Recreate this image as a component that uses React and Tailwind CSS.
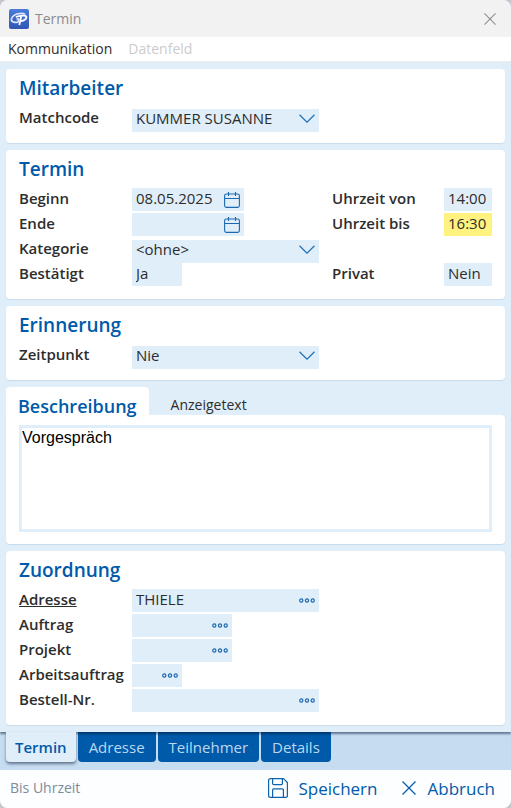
// Appointment dialog: grouped form cards, page tabs and the action footer.
import { useState } from 'react'

const PAGES = ['Termin', 'Adresse', 'Teilnehmer', 'Details']

function LogoIcon() {
  return (
    <svg className="h-5 w-5" viewBox="0 0 20 20" fill="none" aria-hidden="true">
      <defs>
        <linearGradient id="logo" x1="0" y1="0" x2="0" y2="1">
          <stop offset="0" stopColor="#4a7cda" />
          <stop offset="1" stopColor="#3156b4" />
        </linearGradient>
      </defs>
      <rect width="20" height="20" rx="2" fill="url(#logo)" />
      <path d="M16.200 5.400C13 3.200 4.600 4.800 2.700 9.300C1.400 12.600 4.600 14.200 9 12.900L9.700 10H7.500" stroke="#dfe8fa" strokeWidth="1.600" />
      <path d="M10.300 16L12.200 7.500M6.800 8C10 6.800 17.800 5.300 17.500 8.200C17.200 10.700 14.300 11.800 11.800 12.200" stroke="#fff" strokeWidth="1.800" />
    </svg>
  )
}

function ChevronIcon() {
  return (
    <svg className="pointer-events-none absolute right-1 top-[7px] h-[9px] w-4" viewBox="0 0 16 9" fill="none" stroke="#1c70b8" strokeWidth="1.200" aria-hidden="true">
      <path d="M0.500 0.800L8 8.200L15.500 0.800" />
    </svg>
  )
}

function CalendarIcon() {
  return (
    <svg className="h-4 w-4" viewBox="0 0 16 16" fill="none" stroke="#1c68b0" strokeWidth="1.100" aria-hidden="true">
      <rect x="0.600" y="2" width="14.800" height="13.400" rx="1.800" />
      <path d="M0.600 6.500H15.400M4.500 0V4M11.500 0V4" />
    </svg>
  )
}

function DotsIcon() {
  return (
    <svg className="h-[5px] w-4" viewBox="0 0 16 5" fill="none" stroke="#1c68b0" strokeWidth="1.200" aria-hidden="true">
      <circle cx="2.300" cy="2.500" r="1.600" />
      <circle cx="8" cy="2.500" r="1.600" />
      <circle cx="13.700" cy="2.500" r="1.600" />
    </svg>
  )
}

function SaveIcon() {
  return (
    <svg className="h-5 w-5" viewBox="0 0 20 20" fill="none" stroke="#0f62ac" strokeWidth="1.200" aria-hidden="true">
      <path d="M2.500 0.600H15.500L19.400 4.500V17.500A1.900 1.900 0 0 1 17.500 19.400H2.500A1.900 1.900 0 0 1 0.600 17.500V2.500A1.900 1.900 0 0 1 2.500 0.600Z" />
      <path d="M4.600 0.600V5.500A1.200 1.200 0 0 0 5.800 6.700H13.200A1.200 1.200 0 0 0 14.400 5.500V0.600M4.600 19.400V12A1.200 1.200 0 0 1 5.800 10.800H14.200A1.200 1.200 0 0 1 15.400 12V19.400" />
    </svg>
  )
}

function CrossIcon({ className }) {
  return (
    <svg className={className} viewBox="0 0 14 14" fill="none" stroke="currentColor" strokeWidth="1.200" aria-hidden="true">
      <path d="M0.500 0.500L13.500 13.500M13.500 0.500L0.500 13.500" />
    </svg>
  )
}

function Card({ title, children }) {
  return (
    <section className="rounded bg-white px-[13px] pb-[13px] shadow-[0_1px_1px_rgba(0,60,120,0.1)]">
      <h2 className="h-[38px] text-[19px] leading-[38px] font-semibold text-[#005aaa]">{title}</h2>
      <div className="grid grid-cols-[113px_minmax(0,1fr)_125px_48px] gap-y-0.5">{children}</div>
    </section>
  )
}

function Label({ htmlFor, className = '', children }) {
  return (
    <label htmlFor={htmlFor} className={`leading-[21px] font-semibold whitespace-nowrap ${className}`}>
      {children}
    </label>
  )
}

function SelectField({ id, value }) {
  return (
    <div className="relative h-[23px]">
      <select id={id} defaultValue={value} className="h-full w-full appearance-none bg-[#e0eef9] pr-6 pb-1 pl-1 leading-[19px]">
        <option>{value}</option>
      </select>
      <ChevronIcon />
    </div>
  )
}

function TextField({ id, value, className }) {
  return <input id={id} type="text" defaultValue={value} className={`h-[23px] px-1 pb-1 leading-[19px] ${className}`} />
}

function DateField({ id, value }) {
  return (
    <div className="flex h-[23px] w-28 items-center bg-[#e0eef9] px-1">
      <input id={id} type="text" defaultValue={value} className="h-full min-w-0 flex-1 bg-transparent pb-1 leading-[19px]" />
      <button type="button" aria-label="Kalender öffnen">
        <CalendarIcon />
      </button>
    </div>
  )
}

function LookupField({ id, value, className }) {
  return (
    <div className={`flex h-[23px] items-center bg-[#e0eef9] px-1 ${className}`}>
      <input id={id} type="text" defaultValue={value} className="h-full min-w-0 flex-1 bg-transparent pb-1 leading-[19px]" />
      <button type="button" aria-label="Auswählen">
        <DotsIcon />
      </button>
    </div>
  )
}

function App() {
  const [page, setPage] = useState('Termin')
  const [textTab, setTextTab] = useState('Beschreibung')

  return (
    <div className="min-h-screen bg-[#c4c8cc] font-['Open_Sans',sans-serif] text-[15px] leading-[23px] text-[#2d2d2d]">
      <div className="flex min-h-screen flex-col overflow-hidden rounded-lg bg-[#e0eef9]">
        <header className="flex h-[37px] items-center bg-[#f2f2f2] pr-[15px] pl-[9px] text-sm text-[#8b8b8b]">
          <LogoIcon />
          <h1 className="ml-1.5 flex-1">Termin</h1>
          <button type="button" aria-label="Schließen">
            <CrossIcon className="h-3 w-3" />
          </button>
        </header>

        <nav className="flex h-[25px] gap-4 border-b border-[#eeeeee] bg-white px-2 text-sm">
          <button type="button">Kommunikation</button>
          <button type="button" disabled className="text-[#cccccc]">
            Datenfeld
          </button>
        </nav>

        <main className="relative z-10 flex flex-1 flex-col gap-[7px] bg-[#e0eef9] px-1.5 py-[7px] shadow-[0_2px_2px_rgba(0,20,50,0.5)]">
          <Card title="Mitarbeiter">
            <Label htmlFor="matchcode">Matchcode</Label>
            <SelectField id="matchcode" value="KUMMER SUSANNE" />
          </Card>

          <Card title="Termin">
            <Label htmlFor="beginn">Beginn</Label>
            <DateField id="beginn" value="08.05.2025" />
            <Label htmlFor="von" className="pl-[13px]">Uhrzeit von</Label>
            <TextField id="von" value="14:00" className="w-12 bg-[#e0eef9]" />

            <Label htmlFor="ende">Ende</Label>
            <DateField id="ende" value="" />
            <Label htmlFor="bis" className="pl-[13px]">Uhrzeit bis</Label>
            <TextField id="bis" value="16:30" className="w-12 bg-[#fff27f]" />

            <Label htmlFor="kategorie">Kategorie</Label>
            <SelectField id="kategorie" value="<ohne>" />

            <Label htmlFor="bestaetigt" className="col-start-1">Bestätigt</Label>
            <TextField id="bestaetigt" value="Ja" className="w-[50px] bg-[#e0eef9]" />
            <Label htmlFor="privat" className="pl-[13px]">Privat</Label>
            <TextField id="privat" value="Nein" className="w-12 bg-[#e0eef9]" />
          </Card>

          <Card title="Erinnerung">
            <Label htmlFor="zeitpunkt">Zeitpunkt</Label>
            <SelectField id="zeitpunkt" value="Nie" />
          </Card>

          <section>
            <div className="flex h-7">
              <button
                type="button"
                onClick={() => setTextTab('Beschreibung')}
                className="rounded-t bg-white px-3 pt-2.5 text-lg leading-[18px] font-semibold text-[#005aaa]"
              >
                Beschreibung
              </button>
              <button type="button" onClick={() => setTextTab('Anzeigetext')} className="px-[22px] pt-2 text-sm leading-5">
                Anzeigetext
              </button>
            </div>
            <div className="rounded rounded-tl-none bg-white px-[13px] pt-2.5 pb-3 shadow-[0_1px_1px_rgba(0,60,120,0.1)]">
              <textarea
                aria-label={textTab}
                defaultValue="Vorgespräch"
                className="block h-[107px] w-full resize-none border-3 border-[#e0eef9] bg-white font-['Liberation_Sans',Arial,sans-serif] text-base leading-5 text-black"
              />
            </div>
          </section>

          <Card title="Zuordnung">
            <Label htmlFor="adresse" className="underline">Adresse</Label>
            <LookupField id="adresse" value="THIELE" className="w-full" />
            <Label htmlFor="auftrag" className="col-start-1">Auftrag</Label>
            <LookupField id="auftrag" value="" className="w-[100px]" />
            <Label htmlFor="projekt" className="col-start-1">Projekt</Label>
            <LookupField id="projekt" value="" className="w-[100px]" />
            <Label htmlFor="arbeitsauftrag" className="col-start-1">Arbeitsauftrag</Label>
            <LookupField id="arbeitsauftrag" value="" className="w-[50px]" />
            <Label htmlFor="bestellnr" className="col-start-1">Bestell-Nr.</Label>
            <LookupField id="bestellnr" value="" className="w-full" />
          </Card>
        </main>

        <div className="flex h-[38px] gap-0.5 bg-[#c6dcf0] px-1.5">
          {PAGES.map((name) => (
            <button
              key={name}
              type="button"
              onClick={() => setPage(name)}
              className={
                name === page
                  ? 'relative z-20 h-[30px] rounded-b bg-[#e0eef9] px-[9px] font-semibold text-[#005aaa] shadow-[0_2px_3px_rgba(0,20,50,0.5)]'
                  : 'h-[30px] rounded-b bg-[#005aaa] px-[11px] text-[#bcd8f0]'
              }
            >
              {name}
            </button>
          ))}
        </div>

        <footer className="flex h-[38px] items-center bg-[#fcfeff] pr-4 pb-0.5 pl-2.5">
          <span className="flex-1 text-sm text-[#7d8b9a]">Bis Uhrzeit</span>
          <button type="button" className="flex items-center gap-2.5 text-[17px] text-[#005aaa]">
            <SaveIcon />
            Speichern
          </button>
          <button type="button" className="ml-6 flex items-center gap-3 text-[17px] text-[#005aaa]">
            <CrossIcon className="h-3.5 w-3.5" />
            Abbruch
          </button>
        </footer>
      </div>
    </div>
  )
}

export default App
